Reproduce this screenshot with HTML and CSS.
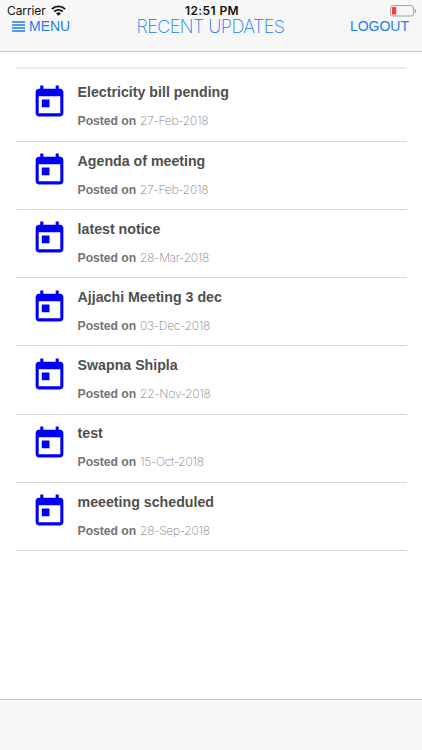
FILE: index.html
```html
<!DOCTYPE html>
<html lang="en">
<head>
<meta charset="utf-8">
<title>Recent Updates</title>
<link rel="stylesheet" href="styles.css">
</head>
<body>
<svg class="sprite" aria-hidden="true">
  <symbol id="today" viewBox="0 0 24 24"><path d="M19 3h-1V1h-2v2H8V1H6v2H5c-1.11 0-1.99.9-1.99 2L3 19c0 1.1.89 2 2 2h14c1.1 0 2-.9 2-2V5c0-1.1-.9-2-2-2zm0 16H5V8h14v11zM7 10h5v5H7z"/></symbol>
</svg>
<header class="header">
  <div class="status">
    <div class="status-left"><span class="carrier">Carrier</span>
      <svg class="wifi" viewBox="0 0 15 11"><path d="M7.5 10.8 5.2 8.4a3.3 3.3 0 0 1 4.6 0z"/><path class="arc" d="M3.3 6.6a6 6 0 0 1 8.4 0M.9 4.1a9.4 9.4 0 0 1 13.2 0"/></svg>
    </div>
    <span class="clock">12:51 PM</span>
    <svg class="battery" viewBox="0 0 27 12"><rect class="case" x=".6" y=".6" width="23" height="10.4" rx="2.3"/><rect class="charge" x="2" y="2" width="4.2" height="7.6" rx=".6"/><path class="cap" d="M24.8 4v3.8q1.5-.5 1.5-1.9T24.8 4z"/></svg>
  </div>
  <nav class="nav">
    <a class="menu"><svg class="bars" viewBox="0 0 13 11"><path d="M0 1h13M0 4h13M0 7h13M0 10h13"/></svg><span>MENU</span></a>
    <h1 class="title">RECENT UPDATES</h1>
    <a class="logout">LOGOUT</a>
  </nav>
</header>
<main class="content">
  <ul class="list">
    <li class="row"><svg class="icon"><use href="#today"/></svg><div class="text"><h2 class="name">Electricity bill pending</h2><p class="meta"><b>Posted on</b><span>27-Feb-2018</span></p></div></li>
    <li class="row"><svg class="icon"><use href="#today"/></svg><div class="text"><h2 class="name">Agenda of meeting</h2><p class="meta"><b>Posted on</b><span>27-Feb-2018</span></p></div></li>
    <li class="row"><svg class="icon"><use href="#today"/></svg><div class="text"><h2 class="name">latest notice</h2><p class="meta"><b>Posted on</b><span>28-Mar-2018</span></p></div></li>
    <li class="row"><svg class="icon"><use href="#today"/></svg><div class="text"><h2 class="name">Ajjachi Meeting 3 dec</h2><p class="meta"><b>Posted on</b><span>03-Dec-2018</span></p></div></li>
    <li class="row"><svg class="icon"><use href="#today"/></svg><div class="text"><h2 class="name">Swapna Shipla</h2><p class="meta"><b>Posted on</b><span>22-Nov-2018</span></p></div></li>
    <li class="row"><svg class="icon"><use href="#today"/></svg><div class="text"><h2 class="name">test</h2><p class="meta"><b>Posted on</b><span>15-Oct-2018</span></p></div></li>
    <li class="row"><svg class="icon"><use href="#today"/></svg><div class="text"><h2 class="name">meeeting scheduled</h2><p class="meta"><b>Posted on</b><span>28-Sep-2018</span></p></div></li>
  </ul>
</main>
<footer class="footer"></footer>
</body>
</html>
```
FILE: styles.css
```css
* { box-sizing: border-box; margin: 0; padding: 0; }
body {
  display: flex;
  flex-direction: column;
  height: 750px;
  overflow: hidden;
  background: #fff;
  font-family: "Liberation Sans", Arial, sans-serif;
}
.sprite { display: none; }
.header {
  flex: none;
  height: 52px;
  background: #f7f7f7;
  border-bottom: 1px solid #c8c8c8;
}
.status {
  display: grid;
  grid-template-columns: 1fr auto 1fr;
  align-items: center;
  height: 17px;
  padding: 4px 5px 0 7px;
  font: 12px/12px Inter, sans-serif;
  color: #111;
}
.status-left { display: flex; align-items: center; gap: 5px; }
.carrier { letter-spacing: -0.1px; }
.wifi { width: 15px; height: 11px; }
.arc { fill: none; stroke: #111; stroke-width: 1.9; }
.clock { font-weight: 600; letter-spacing: 0.4px; }
.battery { justify-self: end; width: 27px; height: 12px; }
.case { fill: none; stroke: #a0a0a0; stroke-width: 1; }
.charge { fill: #ff3b30; }
.cap { fill: #a0a0a0; }
.nav {
  display: grid;
  grid-template-columns: 1fr auto 1fr;
  align-items: center;
  height: 18px;
  padding: 0 13px 0 12px;
  color: #1a7df0;
  font-size: 14px;
  line-height: 18px;
}
.menu { display: flex; align-items: center; gap: 4px; }
.bars { width: 13px; height: 11px; fill: none; stroke: #1a7df0; stroke-width: 1.7; }
.title {
  padding-top: 1px;
  font: 200 18px/17px Inter, sans-serif;
  letter-spacing: -0.55px;
}
.logout { justify-self: end; }
.content { flex: 1; padding: 15px 15.5px 0 16px; }
.list { list-style: none; border-top: 2px solid #e9e9e9; padding-top: 4.6px; }
.row {
  display: flex;
  height: 68.2px;
  padding: 10.4px 0 0 14.7px;
  border-bottom: 1px solid #d9d9d9;
}
.icon { flex: none; width: 37px; height: 37px; fill: #0000f5; }
.text { padding: 0.5px 0 0 9.9px; }
.name {
  font-size: 14.2px;
  line-height: 16px;
  font-weight: 700;
  color: #4f4f4f;
  white-space: nowrap;
}
.meta {
  display: flex;
  gap: 4px;
  margin-top: 14px;
  font-size: 12.2px;
  line-height: 14px;
}
.meta b { color: #747474; letter-spacing: -0.05px; }
.meta span {
  font: 200 12px/14px Inter, sans-serif;
  letter-spacing: -0.3px;
  color: #808080;
}
.footer { flex: none; height: 51px; background: #f7f7f7; border-top: 1px solid #c8c8c8; }
```
